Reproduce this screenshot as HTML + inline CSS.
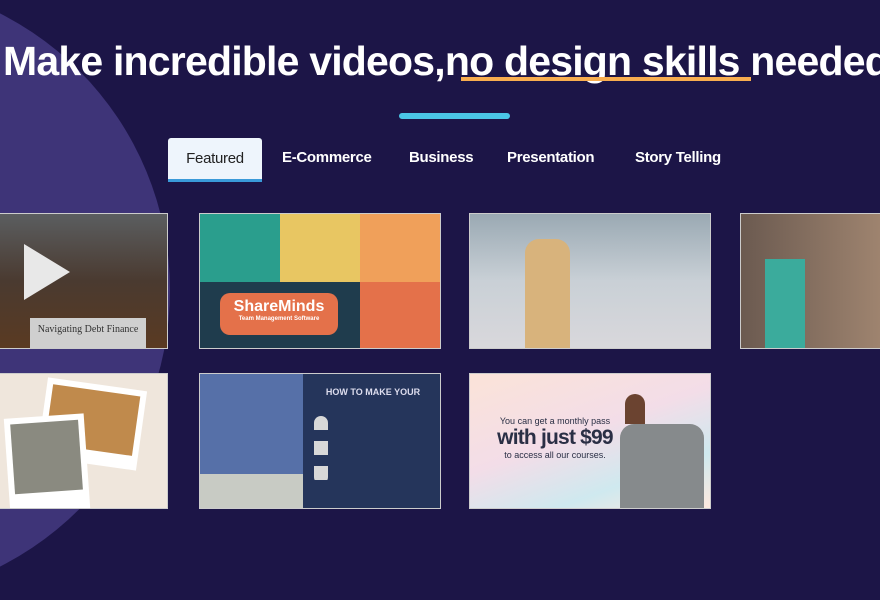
<!DOCTYPE html>
<html><head><meta charset="utf-8"><style>
*{margin:0;padding:0;box-sizing:border-box}
body{width:880px;height:548px;overflow:hidden;background:#1c1547;font-family:"Liberation Sans",sans-serif;position:relative}
.circle{position:absolute;left:-450px;top:-20px;width:620px;height:620px;border-radius:50%;background:#3e3478}
h1{position:absolute;left:3px;top:38px;white-space:nowrap;color:#fff;font-size:41px;font-weight:bold;letter-spacing:-0.8px}
.ul{position:absolute;left:461px;top:77px;width:290px;height:4px;background:#f8ad4f}
.bar{position:absolute;left:399px;top:113px;width:111px;height:6px;border-radius:3px;background:#4ac6e6}
.tab{position:absolute;top:149px;color:#fff;font-size:15px;font-weight:bold;letter-spacing:-0.3px}
.feat{position:absolute;left:168px;top:138px;width:94px;height:44px;background:#eef5fc;border-bottom:3px solid #3a9ad9;border-radius:3px 3px 0 0;color:#222;font-size:15px;text-align:center;line-height:41px;letter-spacing:-0.3px}
.c{position:absolute;width:242px;height:136px;border:1px solid #ccc;overflow:hidden}
</style></head><body>
<div class="circle"></div>
<h1>Make incredible videos,no design skills needed</h1>
<div class="ul"></div>
<div class="bar"></div>
<div class="feat">Featured</div>
<div class="tab" style="left:282px">E-Commerce</div>
<div class="tab" style="left:409px">Business</div>
<div class="tab" style="left:507px">Presentation</div>
<div class="tab" style="left:635px">Story Telling</div>

<div class="c" style="left:-74px;top:213px;background:linear-gradient(180deg,#5b5e60 0%,#4a3a30 50%,#5a3a22 100%)">
 <div style="position:absolute;left:97px;top:30px;width:0;height:0;border-top:28px solid transparent;border-bottom:28px solid transparent;border-left:46px solid #e8e8e8"></div>
 <div style="position:absolute;left:103px;top:104px;width:116px;height:32px;background:#cfcfcf;font-size:10px;color:#333;text-align:center;padding-top:6px;font-family:'Liberation Serif',serif">Navigating Debt Finance</div>
</div>

<div class="c" style="left:199px;top:213px;background:#1f3c4d">
 <div style="position:absolute;left:0;top:0;width:80px;height:68px;background:#2a9e8d"></div>
 <div style="position:absolute;left:80px;top:0;width:80px;height:68px;background:#e8c662"></div>
 <div style="position:absolute;left:160px;top:0;width:82px;height:68px;background:#f0a05a"></div>
 <div style="position:absolute;left:160px;top:68px;width:82px;height:68px;background:#e4714a"></div>
 <div style="position:absolute;left:20px;top:79px;width:118px;height:42px;background:#e4714a;border-radius:10px;color:#fff;text-align:center;font-weight:bold;font-size:16px;padding-top:5px">ShareMinds<div style="font-size:6px">Team Management Software</div></div>
</div>

<div class="c" style="left:469px;top:213px;background:linear-gradient(180deg,#9aa9b3 0%,#c9d0d6 50%,#d9d8dc 100%)">
 <div style="position:absolute;left:55px;top:25px;width:45px;height:111px;background:#d8b37c;border-radius:14px 14px 0 0"></div>
</div>

<div class="c" style="left:740px;top:213px;background:linear-gradient(90deg,#6b5a50 0%,#a08570 60%,#f3f2f0 70%)">
 <div style="position:absolute;left:24px;top:45px;width:40px;height:91px;background:#3bab9c"></div>
</div>

<div class="c" style="left:-74px;top:373px;background:#efe6dc">
 <div style="position:absolute;left:115px;top:10px;width:100px;height:80px;background:#fff;transform:rotate(8deg)"><div style="margin:6px;height:60px;background:#c08a4c"></div></div>
 <div style="position:absolute;left:80px;top:42px;width:80px;height:95px;background:#fff;transform:rotate(-4deg)"><div style="margin:6px;height:70px;background:#8a8a80"></div></div>
</div>

<div class="c" style="left:199px;top:373px;background:#25355b">
 <div style="position:absolute;left:0;top:0;width:103px;height:136px;background:#5670a8"></div>
 <div style="position:absolute;left:0;top:100px;width:103px;height:36px;background:#c8cbc4"></div>
 <div style="position:absolute;left:108px;top:13px;width:130px;color:#dde;font-size:9px;font-weight:bold;text-align:center">HOW TO MAKE YOUR</div>
 <div style="position:absolute;left:114px;top:42px;width:14px;height:68px;background:repeating-linear-gradient(180deg,#d8d8d8 0 14px,transparent 14px 25px);border-radius:7px"></div>
</div>

<div class="c" style="left:469px;top:373px;background:linear-gradient(160deg,#fbe3d8 0%,#f3dde8 45%,#cfe9ef 75%,#fde9df 100%)">
 <div style="position:absolute;left:20px;top:42px;width:130px;text-align:center;color:#2a2f45">
  <div style="font-size:9px">You can get a monthly pass</div>
  <div style="font-size:21px;font-weight:bold;letter-spacing:-0.8px">with just $99</div>
  <div style="font-size:9px">to access all our courses.</div>
 </div>
 <div style="position:absolute;left:155px;top:20px;width:20px;height:30px;background:#6b4330;border-radius:10px 10px 0 0"></div>
 <div style="position:absolute;left:150px;top:50px;width:84px;height:86px;background:#868a8c;border-radius:14px 14px 0 0"></div>
</div>
</body></html>
